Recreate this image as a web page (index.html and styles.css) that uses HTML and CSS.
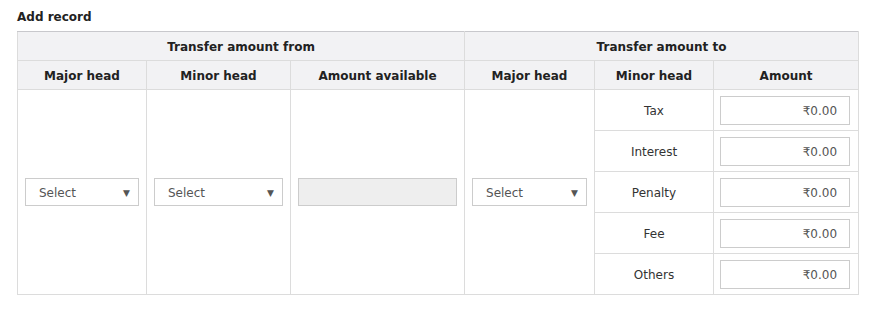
FILE: index.html
```html
<!DOCTYPE html>
<html lang="en">
<head>
    <meta charset="UTF-8">
    <title>Add record</title>
    <link rel="stylesheet" href="styles.css">
</head>
<body>
    <div class="container">
        <h4>Add record</h4>
        <table class="transfer-table">
            <colgroup>
                <col class="col-major">
                <col class="col-minor">
                <col class="col-avail">
                <col class="col-major2">
                <col class="col-minor2">
                <col class="col-amount">
            </colgroup>
            <thead>
                <tr>
                    <th colspan="3">Transfer amount from</th>
                    <th colspan="3">Transfer amount to</th>
                </tr>
                <tr>
                    <th>Major head</th>
                    <th>Minor head</th>
                    <th>Amount available</th>
                    <th>Major head</th>
                    <th>Minor head</th>
                    <th>Amount</th>
                </tr>
            </thead>
            <tbody>
                <tr>
                    <td rowspan="5">
                        <div class="select-box"><span>Select</span><i class="caret">&#9660;</i></div>
                    </td>
                    <td rowspan="5">
                        <div class="select-box"><span>Select</span><i class="caret">&#9660;</i></div>
                    </td>
                    <td rowspan="5">
                        <input type="text" class="readonly-input" disabled>
                    </td>
                    <td rowspan="5">
                        <div class="select-box"><span>Select</span><i class="caret">&#9660;</i></div>
                    </td>
                    <td class="label-cell">Tax</td>
                    <td class="amount-cell"><input type="text" class="amount-input" value="₹0.00"></td>
                </tr>
                <tr>
                    <td class="label-cell">Interest</td>
                    <td class="amount-cell"><input type="text" class="amount-input" value="₹0.00"></td>
                </tr>
                <tr>
                    <td class="label-cell">Penalty</td>
                    <td class="amount-cell"><input type="text" class="amount-input" value="₹0.00"></td>
                </tr>
                <tr>
                    <td class="label-cell">Fee</td>
                    <td class="amount-cell"><input type="text" class="amount-input" value="₹0.00"></td>
                </tr>
                <tr>
                    <td class="label-cell">Others</td>
                    <td class="amount-cell"><input type="text" class="amount-input" value="₹0.00"></td>
                </tr>
            </tbody>
        </table>
    </div>
</body>
</html>
```

FILE: styles.css
```css
body {
    font-family: 'DejaVu Sans', Verdana, sans-serif;
    font-size: 12px;
    color: #222;
    background-color: #fff;
    margin: 0;
    padding: 0;
}
.container {
    padding: 9px 17px 0 17px;
}
h4 {
    margin: 0 0 6px 0;
    font-size: 12px;
    font-weight: bold;
    line-height: 16px;
}
.transfer-table {
    width: 841px;
    border-collapse: collapse;
    table-layout: fixed;
}
.transfer-table th {
    background-color: #f2f2f4;
    border: 1px solid #dcdcdc;
    font-weight: bold;
    height: 26px;
    padding: 2px 4px 0 4px;
    text-align: center;
}
.transfer-table thead tr:first-child th {
    border-top-color: #c8c8cc;
}
.transfer-table td {
    border: 1px solid #dcdcdc;
    padding: 0 7px;
    text-align: center;
    height: 40px;
}
.transfer-table td.label-cell {
    height: 38px;
    padding-top: 2px;
    color: #333;
}
.transfer-table td.amount-cell {
    padding: 0 8px 0 6px;
}
.col-major { width: 129px; }
.col-minor { width: 144px; }
.col-avail { width: 174px; }
.col-major2 { width: 130px; }
.col-minor2 { width: 119px; }
.col-amount { width: 145px; }
.select-box {
    display: flex;
    justify-content: space-between;
    align-items: center;
    border: 1px solid #ccc;
    padding: 1px 8px 0 13px;
    box-sizing: border-box;
    height: 28px;
    color: #555;
    text-align: left;
}
.caret {
    font-style: normal;
    font-size: 9px;
    color: #555;
}
.readonly-input {
    width: 100%;
    height: 28px;
    box-sizing: border-box;
    background-color: #eee;
    border: 1px solid #ccc;
    margin: 0;
}
.amount-input {
    width: 100%;
    height: 29px;
    box-sizing: border-box;
    border: 1px solid #ccc;
    padding: 1px 12px 0 12px;
    text-align: right;
    font-family: inherit;
    font-size: 12px;
    color: #555;
    margin: 0;
}
```
